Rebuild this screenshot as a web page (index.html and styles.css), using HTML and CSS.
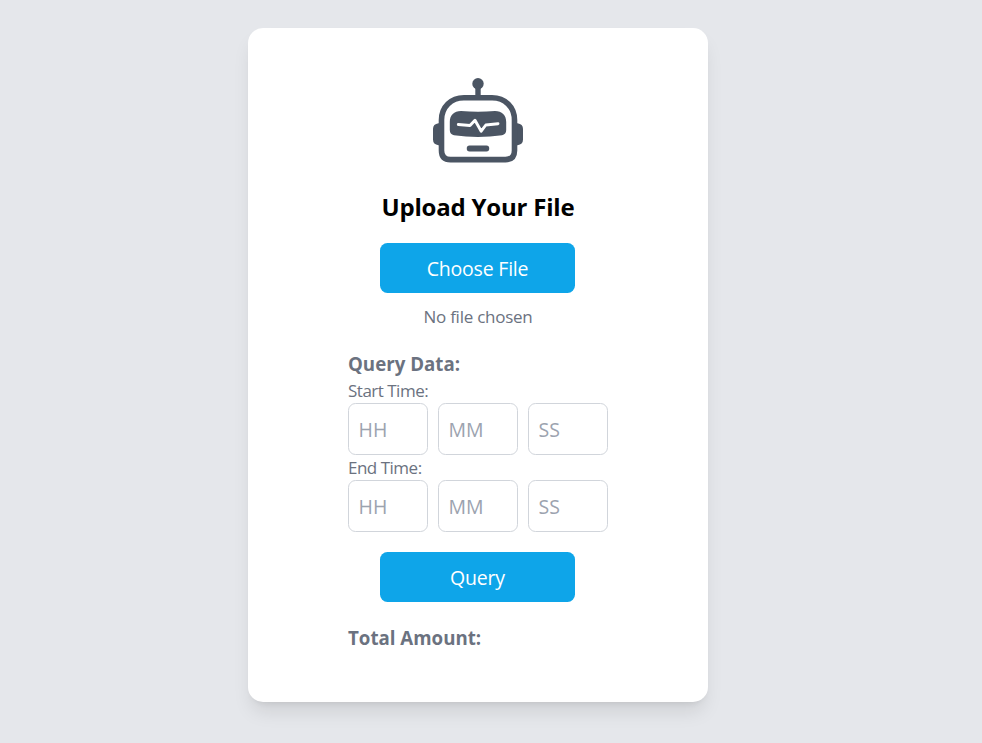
FILE: index.html
```html
<!DOCTYPE html>
<html lang="en">
<head>
<meta charset="utf-8">
<title>Upload Your File</title>
<link rel="stylesheet" href="styles.css">
</head>
<body>
<main class="card">
  <svg class="robot" viewBox="14 10 92 85" aria-hidden="true">
    <circle cx="60" cy="15.7" r="5.7"/>
    <path d="M57.300 19h5.400v10h-5.400z"/>
    <path d="M22 55.200h-1.500Q15 56 15 61v10.500Q15 76.500 20.500 77.200H22zM98 55.200h1.500Q105 56 105 61v10.500Q105 76.500 99.500 77.200H98z"/>
    <path class="shell" d="M46 29.700H74C87 29.700 96.500 39 96.500 52V82.500Q96.500 91.600 87.500 91.600H32.500Q23.500 91.600 23.500 82.500V52C23.500 39 33 29.700 46 29.700Z"/>
    <path d="M43 43Q60 44.300 77 43C84 43 88.200 47 88.200 54V62Q88.200 66.300 84 67.200Q60 70.800 36 67.200Q31.800 66.300 31.800 62V54C31.800 47 36 43 43 43Z"/>
    <path class="pulse" d="M40.300 56.500L52 57.500L57 52.200L63.200 63.200L67.800 57L80 55.700"/>
    <rect x="48.800" y="77.400" width="22.400" height="6" rx="2.700"/>
  </svg>
  <h1 class="title">Upload Your File</h1>
  <button class="button choose">Choose File</button>
  <p class="status">No file chosen</p>
  <form class="query">
    <h2 class="heading">Query Data:</h2>
    <label class="label">Start Time:</label>
    <div class="fields">
      <input class="field" placeholder="HH"><input class="field" placeholder="MM"><input class="field" placeholder="SS">
    </div>
    <label class="label">End Time:</label>
    <div class="fields">
      <input class="field" placeholder="HH"><input class="field" placeholder="MM"><input class="field" placeholder="SS">
    </div>
    <button class="button submit" type="button">Query</button>
    <h2 class="heading total">Total Amount:</h2>
  </form>
</main>
</body>
</html>
```
FILE: styles.css
```css
* { box-sizing: border-box; margin: 0; }
body {
  min-height: 743px;
  padding: 28px 0 0 248px;
  background: #e5e7eb;
  color: #6b7280;
  font-family: "Open Sans", "Noto Sans", sans-serif;
}
.card {
  display: flex;
  flex-direction: column;
  align-items: center;
  width: 460px;
  height: 674px;
  padding-top: 50px;
  border-radius: 15px;
  background: #fff;
  box-shadow: 0 12.5px 19px -4px rgb(0 0 0 / .1), 0 5px 7.5px -5px rgb(0 0 0 / .1);
}
.robot { display: block; width: 92px; height: 85px; fill: #4b5563; }
.shell { fill: none; stroke: #4b5563; stroke-width: 5.6; }
.pulse { fill: none; stroke: #fff; stroke-width: 2.9; stroke-linecap: round; stroke-linejoin: round; }
.title {
  margin-top: 26px;
  color: #000;
  font-size: 24px;
  font-weight: 700;
  letter-spacing: -0.2px;
  line-height: 35px;
  white-space: nowrap;
}
.button {
  display: block;
  width: 195px;
  height: 50px;
  margin-right: 1px;
  padding: 2px 0 0;
  border: 0;
  border-radius: 7.5px;
  background: #0ea5e9;
  color: #fff;
  font: 400 19.5px/28px "Open Sans", sans-serif;
  letter-spacing: -0.2px;
}
.choose { margin-top: 19px; }
.status { margin-top: 11px; font-size: 17px; letter-spacing: -0.25px; line-height: 25px; }
.query { display: flex; flex-direction: column; width: 260px; margin-top: 21px; }
.heading { font-size: 18.7px; font-weight: 700; line-height: 28px; white-space: nowrap; }
.label { height: 25px; padding-top: 1px; font-size: 17px; letter-spacing: -0.5px; line-height: 24px; }
.fields { display: flex; gap: 10px; }
.field {
  width: 80px;
  height: 52px;
  padding: 0 9.5px 0;
  border: 1px solid #d1d5db;
  border-radius: 7.5px;
  background: #fff;
  font: 400 19.5px/28px "Open Sans", sans-serif;
}
.field::placeholder { color: #9ca3af; opacity: 1; }
.submit { align-self: center; margin-top: 20px; }
.total { margin-top: 22px; }
```
